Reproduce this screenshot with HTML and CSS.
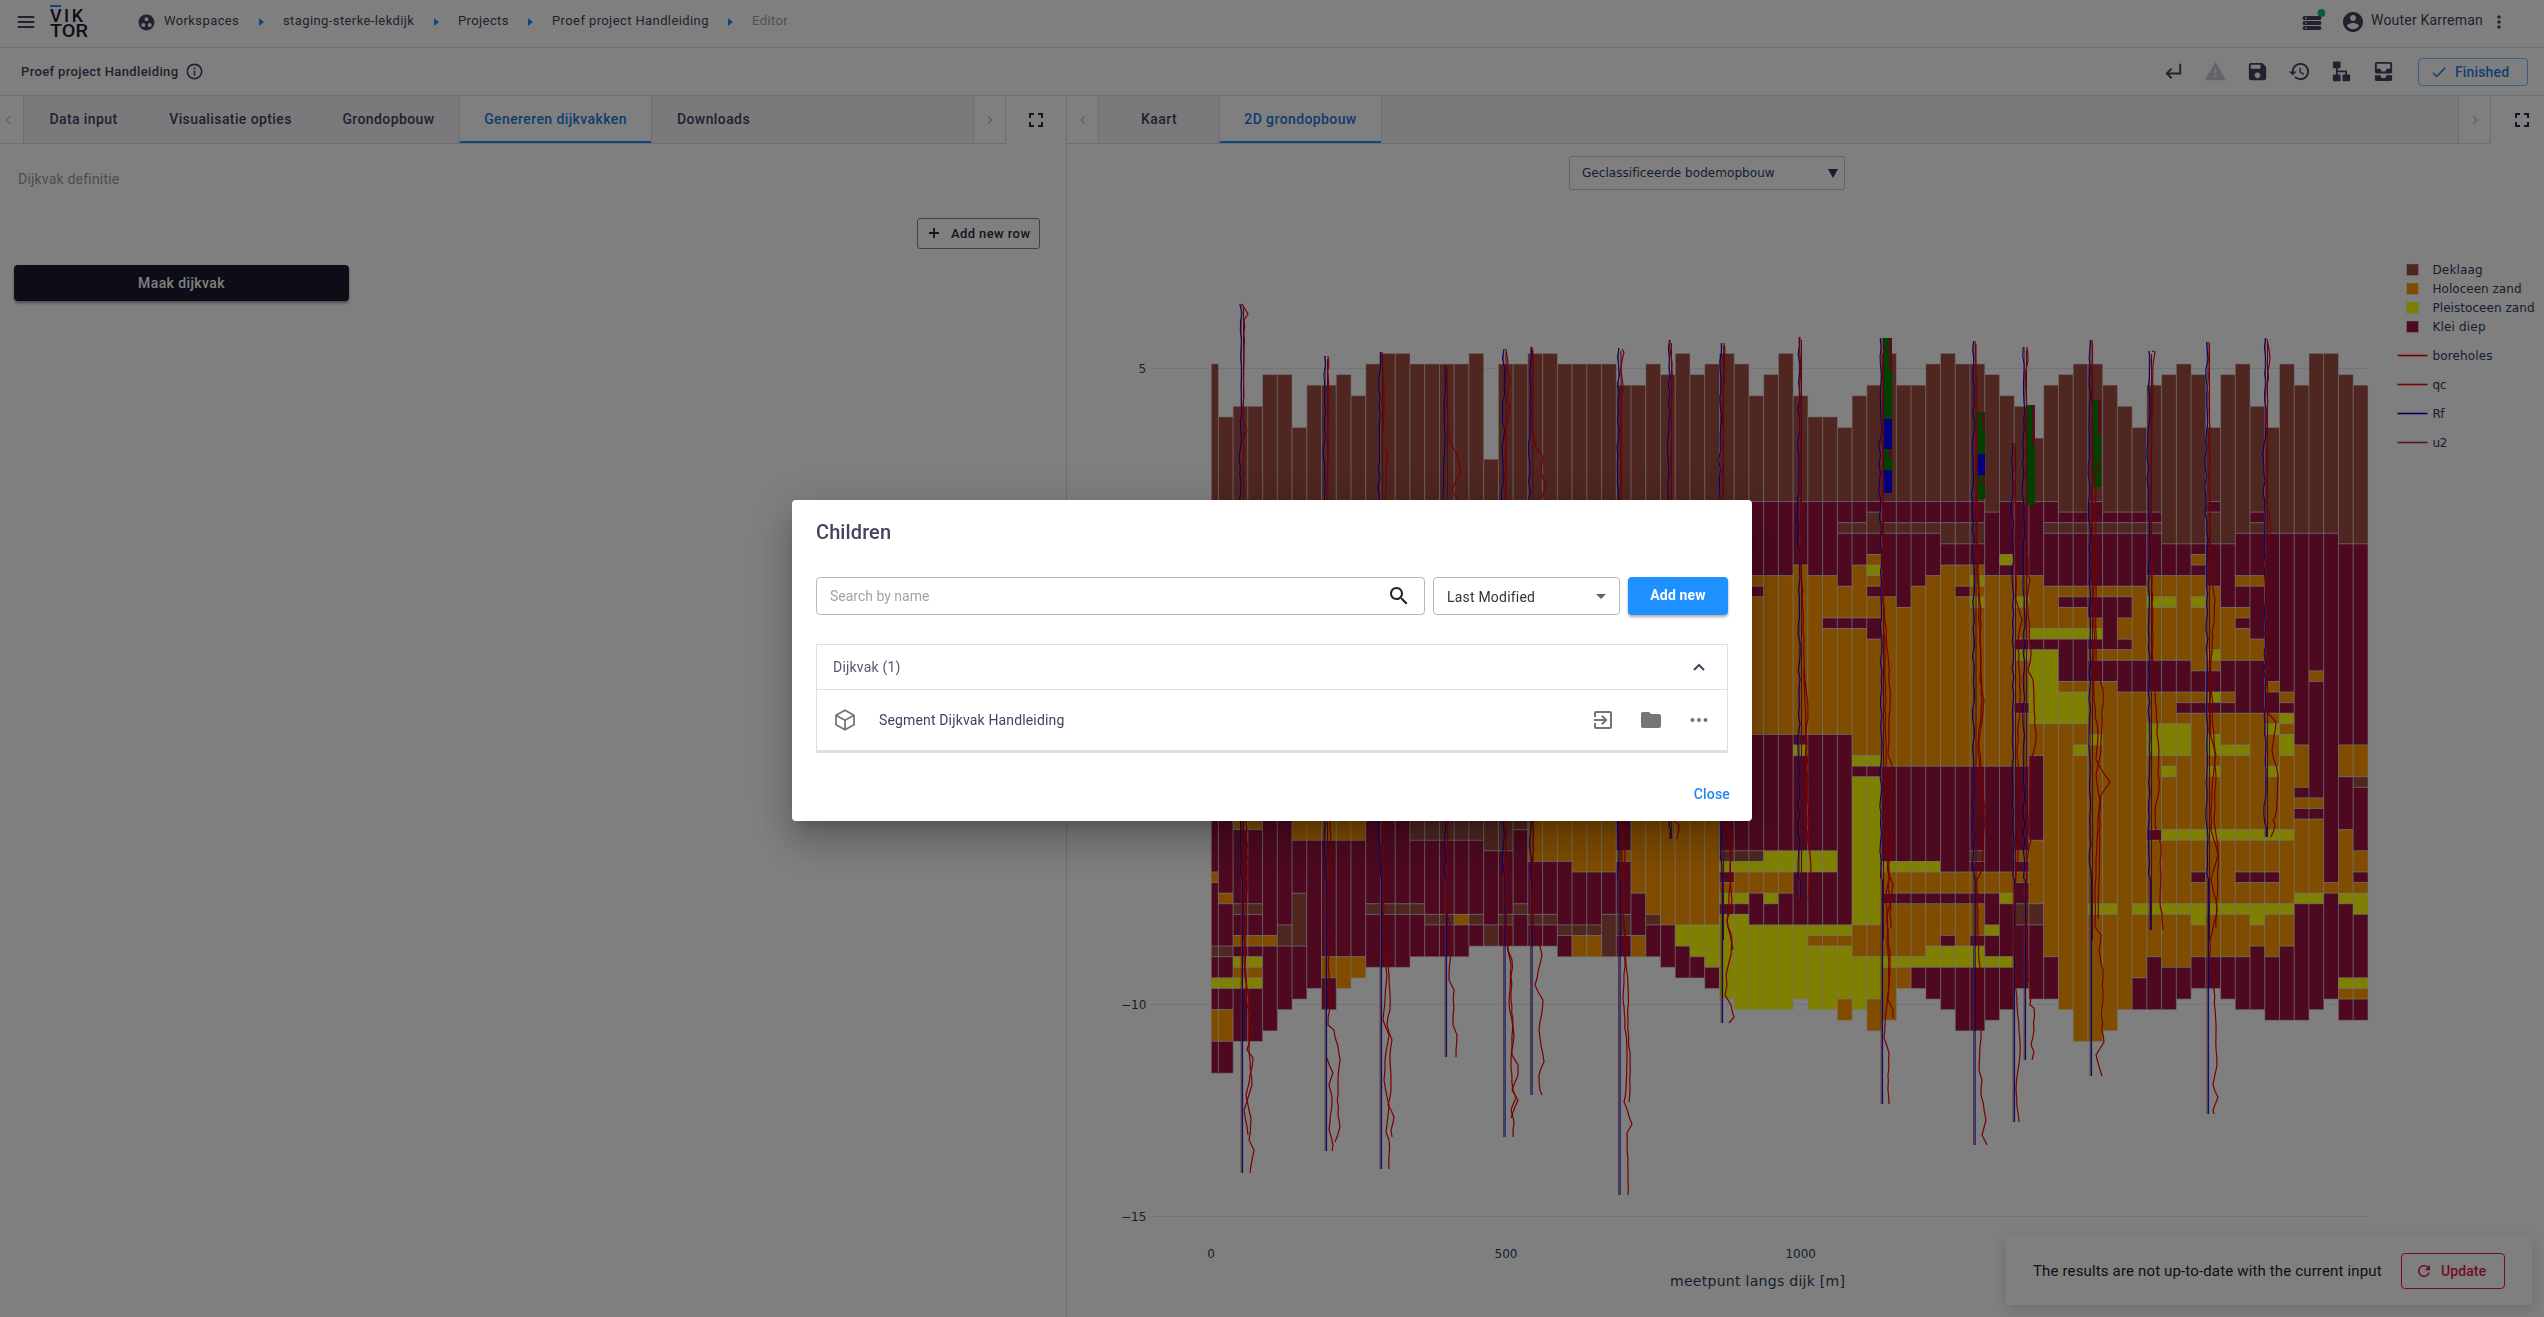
FILE: index.html
```html
<!DOCTYPE html>
<html lang="nl">
<head>
<meta charset="utf-8">
<title>Proef project Handleiding</title>
<link rel="stylesheet" href="styles.css">
</head>
<body>
<div class="app">
  <header class="topbar">
    <svg class="icon menu" viewBox="0 0 24 24" width="22" height="22"><path d="M3 18.5h18v-2.2H3v2.2zm0-5.4h18v-2.2H3v2.2zm0-7.6v2.2h18V5.500H3z"/></svg>
    <svg class="logo" viewBox="0 0 40 34" width="40" height="34">
      <rect class="logo-bar" x="0" y="0" width="11" height="2"/>
      <text x="0" y="16.500" textLength="33" lengthAdjust="spacing">VIK</text>
      <text x="0" y="31.500" textLength="38" lengthAdjust="spacingAndGlyphs">TOR</text>
    </svg>
    <nav class="crumbs">
      <svg class="icon" viewBox="0 0 24 24" width="19" height="19"><path d="M12 2C6.480 2 2 6.480 2 12s4.480 10 10 10 10-4.480 10-10S17.520 2 12 2zM8 17.500c-1.380 0-2.500-1.120-2.500-2.500s1.120-2.500 2.500-2.500 2.500 1.120 2.500 2.500-1.120 2.500-2.500 2.500zM9.500 8c0-1.380 1.120-2.500 2.500-2.500s2.500 1.120 2.500 2.500-1.120 2.500-2.500 2.500S9.500 9.380 9.500 8zm6.500 9.500c-1.380 0-2.500-1.120-2.500-2.500s1.120-2.500 2.500-2.500 2.500 1.120 2.500 2.500-1.120 2.500-2.500 2.500z"/></svg>
      <a class="crumb w1">Workspaces</a><i class="sep"></i>
      <a class="crumb w2">staging-sterke-lekdijk</a><i class="sep"></i>
      <a class="crumb w3">Projects</a><i class="sep"></i>
      <a class="crumb w4">Proef project Handleiding</a><i class="sep"></i>
      <a class="crumb last">Editor</a>
    </nav>
    <div class="user">
      <svg class="queue" viewBox="0 0 24 24" width="24" height="24">
        <path class="ink" d="M3.500 7h15a1.500 1.500 0 0 1 0 4h-15a1.500 1.500 0 0 1 0-4zM3.500 12h15a1.500 1.500 0 0 1 0 4h-15a1.500 1.500 0 0 1 0-4zM3.500 17h15a1.500 1.500 0 0 1 0 4h-15a1.500 1.500 0 0 1 0-4z"/>
        <path class="slots" d="M4 9h2M4 14h2M4 19h2"/>
        <circle class="online" cx="20.500" cy="4" r="4"/>
      </svg>
      <svg class="icon avatar" viewBox="0 0 24 24" width="24" height="24"><path d="M12 2C6.480 2 2 6.480 2 12s4.480 10 10 10 10-4.480 10-10S17.520 2 12 2zm0 3c1.660 0 3 1.340 3 3s-1.340 3-3 3-3-1.340-3-3 1.340-3 3-3zm0 14.200c-2.500 0-4.710-1.280-6-3.220.030-1.990 4-3.080 6-3.080 1.990 0 5.970 1.090 6 3.080-1.290 1.940-3.500 3.220-6 3.220z"/></svg>
      <span class="name">Wouter Karreman</span>
      <svg class="icon" viewBox="0 0 24 24" width="20" height="20"><path d="M12 8c1.100 0 2-.9 2-2s-.9-2-2-2-2 .9-2 2 .9 2 2 2zm0 2c-1.100 0-2 .9-2 2s.9 2 2 2 2-.9 2-2-.9-2-2-2zm0 6c-1.100 0-2 .9-2 2s.9 2 2 2 2-.9 2-2-.9-2-2-2z"/></svg>
    </div>
  </header>

  <div class="toolbar">
    <span class="project">Proef project Handleiding</span>
    <svg class="icon" viewBox="0 0 24 24" width="19" height="19"><path d="M11 7h2v2h-2zm0 4h2v6h-2zm1-9C6.480 2 2 6.480 2 12s4.480 10 10 10 10-4.480 10-10S17.520 2 12 2zm0 18c-4.410 0-8-3.590-8-8s3.590-8 8-8 8 3.590 8 8-3.590 8-8 8z"/></svg>
    <div class="tools">
      <svg class="tool line" viewBox="0 0 24 24"><path d="M19 4v10H6M10 9l-5 5 5 5"/></svg>
      <svg class="tool muted" viewBox="0 0 24 24"><path d="M1 21h22L12 2 1 21zm12-3h-2v-2h2v2zm0-4h-2v-4h2v4z"/></svg>
      <svg class="tool" viewBox="0 0 24 24"><path d="M17 3H5c-1.110 0-2 .9-2 2v14c0 1.100.890 2 2 2h14c1.100 0 2-.9 2-2V7l-4-4zm-5 16c-1.660 0-3-1.340-3-3s1.340-3 3-3 3 1.340 3 3-1.340 3-3 3zm3-10H5V5h10v4z"/></svg>
      <svg class="tool" viewBox="0 0 24 24"><path d="M13 3c-4.970 0-9 4.030-9 9H1l3.890 3.890.070.140L9 12H6c0-3.870 3.130-7 7-7s7 3.130 7 7-3.130 7-7 7c-1.930 0-3.680-.790-4.940-2.060l-1.420 1.420C8.270 19.990 10.510 21 13 21c4.970 0 9-4.030 9-9s-4.030-9-9-9zm-1 5v5l4.280 2.540.720-1.210-3.500-2.080V8H12z"/></svg>
      <svg class="tool" viewBox="0 0 24 24"><path d="M4 1.500h6a1 1 0 0 1 1 1v5a1 1 0 0 1-1 1H8v2.500h9.800v4.200H20a1 1 0 0 1 1 1v5a1 1 0 0 1-1 1h-6a1 1 0 0 1-1-1v-5a1 1 0 0 1 1-1h2v-2.400H8v2.400h2a1 1 0 0 1 1 1v5a1 1 0 0 1-1 1H4a1 1 0 0 1-1-1v-5a1 1 0 0 1 1-1h2.200V8.500H4a1 1 0 0 1-1-1v-5a1 1 0 0 1 1-1z"/></svg>
      <svg class="tool" viewBox="0 0 24 24"><path fill-rule="evenodd" d="M5 2h14a2 2 0 0 1 2 2v8a2 2 0 0 1-2 2H5a2 2 0 0 1-2-2V4a2 2 0 0 1 2-2zm0 2v5h4a3 3 0 0 0 6 0h4V4zM3 16h6a3 3 0 0 0 6 0h6v4a2 2 0 0 1-2 2H5a2 2 0 0 1-2-2z"/></svg>
    </div>
    <button class="finished"><svg viewBox="0 0 24 24" width="18" height="18"><path d="M4 13l5 5L20 6.500"/></svg>Finished</button>
  </div>

  <main class="panes">
    <section class="pane left">
      <div class="tabrow">
        <div class="tabbar">
          <span class="arrow first"><svg viewBox="0 0 8 12" width="6" height="10"><path d="M6 1L2 6l4 5"/></svg></span>
          <a class="tab t119">Data input</a><a class="tab t175">Visualisatie opties</a><a class="tab t141">Grondopbouw</a><a class="tab t193 active">Genereren dijkvakken</a><a class="tab t123">Downloads</a>
          <span class="arrow end"><svg viewBox="0 0 8 12" width="6" height="10"><path d="M2 1l4 5-4 5"/></svg></span>
        </div>
        <span class="expand"><svg viewBox="0 0 14 14" width="14" height="14"><path d="M1 5V1h4M9 1h4v4M13 9v4H9M5 13H1V9"/></svg></span>
      </div>
      <div class="form">
        <div class="field-label">Dijkvak definitie</div>
        <button class="add-row"><svg viewBox="0 0 10 10" width="10" height="10"><path d="M5 0v10M0 5h10"/></svg><span>Add new row</span></button>
        <button class="make">Maak dijkvak</button>
      </div>
    </section>
    <section class="pane right">
      <div class="tabrow">
        <div class="tabbar">
          <span class="arrow"><svg viewBox="0 0 8 12" width="6" height="10"><path d="M6 1L2 6l4 5"/></svg></span>
          <a class="tab t120">Kaart</a><a class="tab t163 active">2D grondopbouw</a>
          <span class="arrow end"><svg viewBox="0 0 8 12" width="6" height="10"><path d="M2 1l4 5-4 5"/></svg></span>
        </div>
        <span class="expand wide"><svg viewBox="0 0 14 14" width="14" height="14"><path d="M1 5V1h4M9 1h4v4M13 9v4H9M5 13H1V9"/></svg></span>
      </div>
      <div class="plot-select"><span>Geclassificeerde bodemopbouw</span><i></i></div>
      <svg id="plot" class="plot" viewBox="1067 190 1477 1127" width="1477" height="1127"></svg>
      <div class="toast">
        <span>The results are not up-to-date with the current input</span>
        <button class="update"><svg viewBox="0 0 24 24" width="18" height="18"><path d="M17.650 6.350C16.200 4.900 14.210 4 12 4c-4.420 0-7.990 3.580-7.990 8s3.570 8 7.990 8c3.730 0 6.840-2.550 7.730-6h-2.080c-.820 2.330-3.040 4-5.650 4-3.310 0-6-2.690-6-6s2.690-6 6-6c1.660 0 3.140.690 4.220 1.780L13 11h7V4l-2.350 2.350z"/></svg>Update</button>
      </div>
    </section>
  </main>
</div>

<div class="backdrop">
  <div class="dialog">
    <h2>Children</h2>
    <div class="filters">
      <div class="search"><span>Search by name</span><svg viewBox="0 0 24 24" width="24" height="24"><path d="M15.500 14h-.790l-.280-.270C15.410 12.590 16 11.110 16 9.500 16 5.910 13.090 3 9.500 3S3 5.910 3 9.500 5.910 16 9.500 16c1.610 0 3.090-.590 4.230-1.570l.270.280v.790l5 4.990L20.490 19l-4.990-5zm-6 0C7.010 14 5 11.990 5 9.500S7.010 5 9.500 5 14 7.010 14 9.500 11.990 14 9.500 14z"/></svg></div>
      <div class="sort"><span>Last Modified</span><i></i></div>
      <button class="add-new">Add new</button>
    </div>
    <div class="list">
      <div class="group"><span>Dijkvak (1)</span><svg viewBox="0 0 12 8" width="12" height="8"><path d="M1 7l5-5 5 5"/></svg></div>
      <div class="row">
        <svg class="cube" viewBox="0 0 24 24" width="24" height="24"><path d="M12 2.200l9 5v9.600l-9 5-9-5V7.200zM3.500 7.500L12 12.300l8.500-4.800M12 12.300v9.500"/></svg>
        <span class="label">Segment Dijkvak Handleiding</span>
        <svg class="act" viewBox="0 0 24 24" width="24" height="24"><path d="M10.090 15.590L11.500 17l5-5-5-5-1.410 1.410L12.670 11H3v2h9.670l-2.580 2.590zM19 3H5c-1.110 0-2 .9-2 2v4h2V5h14v14H5v-4H3v4c0 1.100.890 2 2 2h14c1.100 0 2-.9 2-2V5c0-1.100-.9-2-2-2z"/></svg>
        <svg class="act" viewBox="0 0 24 24" width="24" height="24"><path d="M10 4H4c-1.100 0-1.990.9-1.990 2L2 18c0 1.100.9 2 2 2h16c1.100 0 2-.9 2-2V8c0-1.100-.9-2-2-2h-8l-2-2z"/></svg>
        <svg class="act" viewBox="0 0 24 24" width="24" height="24"><circle cx="5.500" cy="12" r="2"/><circle cx="12" cy="12" r="2"/><circle cx="18.500" cy="12" r="2"/></svg>
      </div>
    </div>
    <button class="close">Close</button>
  </div>
</div>
<script src="chart.js"></script>
</body>
</html>
```
FILE: styles.css
```css
* { box-sizing: border-box; }
body { margin: 0; font-family: Roboto, "Liberation Sans", sans-serif; font-size: 14px; color: #46415e; background: #fff; overflow: hidden; }
button { font: inherit; background: none; border: 0; padding: 0; }
.app { display: flex; flex-direction: column; width: 100vw; height: 100vh; }
.icon, .ink { fill: #46415e; }

.topbar { display: flex; align-items: center; flex: none; height: 48px; border-bottom: 1px solid #dcdce0; padding: 0 35px 4px 15px; }
.menu { margin-top: 0; }
.logo { margin-left: 13px; margin-top: 1px; overflow: visible; }
.logo text { font: 500 18px Roboto, sans-serif; fill: #1c1b30; }
.logo-bar { fill: #1e90ff; }
.crumbs { display: flex; align-items: center; margin-left: 47px; font-size: 13px; letter-spacing: .4px; }
.crumbs .icon { margin-top: 1px; }
.crumb { white-space: nowrap; margin-top: -3px; }
.w1 { width: 95px; margin-left: 8px; }
.w2 { width: 151px; }
.w3 { width: 70px; }
.w4 { width: 176px; }
.crumb.last { color: #a0a0a0; }
.sep { width: 5px; margin-right: 19px; border-left: 5px solid #1e90ff; border-top: 4px solid transparent; border-bottom: 4px solid transparent; }
.user { display: flex; align-items: center; margin-left: auto; }
.queue { margin-right: 16px; margin-top: -1px; }
.slots { stroke: #fff; stroke-width: 1; fill: none; }
.online { fill: #00c08b; }
.name { width: 118px; margin: -3px 0 0 6px; font-size: 14px; letter-spacing: .2px; white-space: nowrap; }

.toolbar { display: flex; align-items: center; flex: none; height: 48px; border-bottom: 1px solid #dcdce0; padding: 0 16px 0 21px; }
.project { width: 164px; font-weight: 500; font-size: 13px; letter-spacing: .37px; white-space: nowrap; }
.tools { display: flex; gap: 19px; margin-left: auto; }
.tool { width: 23px; height: 23px; fill: #46415e; }
.tool.muted { fill: #c9c8d4; }
.tool.line { fill: none; stroke: #46415e; stroke-width: 2; }
.finished { display: flex; align-items: center; gap: 7px; width: 110px; height: 28px; margin-left: 23px; padding-left: 11px; border: 1px solid #7abcff; border-radius: 4px; color: #1e7fe6; font-weight: 500; letter-spacing: .15px; }
.finished path { fill: none; stroke: #1e7fe6; stroke-width: 2; }

.panes { display: flex; flex: 1; min-height: 0; }
.pane { display: flex; flex-direction: column; position: relative; }
.left { width: 1067px; border-right: 1px solid #dcdce0; }
.right { flex: 1; }
.tabrow { display: flex; flex: none; height: 48px; }
.tabbar { display: flex; flex: 1; background: #f5f5fa; border-bottom: 1px solid #dcdce0; }
.arrow { display: flex; align-items: center; justify-content: center; width: 32px; background: #fff; border-right: 1px solid #dcdce0; }
.arrow.first { width: 24px; padding-right: 8px; }
.arrow.end { margin-left: auto; border-left: 1px solid #dcdce0; width: 33px; }
.arrow path { fill: none; stroke: #b6b5c2; stroke-width: 1.600; }
.tab { display: flex; align-items: center; justify-content: center; font-weight: 500; letter-spacing: .4px; padding-bottom: 1px; white-space: nowrap; }
.tab.active { background: #fff; color: #1e78dc; border: 1px solid #dcdce0; border-width: 0 1px; box-shadow: inset 0 -2px #1e90ff; }
.t119 { width: 119px; } .t120 { width: 120px; } .t175 { width: 175px; } .t141 { width: 141px; } .t193 { width: 193px; } .t123 { width: 123px; } .t163 { width: 163px; }
.expand { display: flex; align-items: center; justify-content: center; width: 60px; }
.expand.wide { width: 53px; padding-left: 9px; }
.expand path { fill: none; stroke: #2c2940; stroke-width: 2; }

.form { display: flex; flex-direction: column; padding: 26px 26px 0 14px; }
.field-label { margin-left: 4px; line-height: 18px; color: #9a9a9a; letter-spacing: .2px; }
.add-row { display: flex; align-items: center; align-self: flex-end; width: 123px; height: 31px; margin-top: 30px; padding: 0 0 1px 11px; gap: 12px; border: 1px solid #808080; border-radius: 3px; color: #2c2940; font-size: 13px; font-weight: 500; letter-spacing: .4px; }
.add-row path { stroke: #2c2940; stroke-width: 1.800; }
.make { width: 335px; height: 36px; margin-top: 16px; border-radius: 4px; background: #1b1a2e; color: #fff; font-weight: 500; letter-spacing: .4px; padding-bottom: 1px; box-shadow: 0 2px 3px rgba(0,0,0,.4); }

.plot-select { display: flex; align-items: center; justify-content: space-between; flex: none; width: 276px; height: 34px; margin: 12px 0 0 502px; padding: 0 6px 0 12px; border: 1px solid #bec8d9; border-radius: 2px; font: 12px "DejaVu Sans", sans-serif; letter-spacing: .05px; color: #2a3f5f; }
.plot-select i { border: 5px solid transparent; border-top: 9px solid #2a3f5f; border-bottom: 0; }
.plot { flex: none; display: block; }
.plot text { font-family: "DejaVu Sans", sans-serif; font-size: 12px; fill: #2a3f5f; }
.plot .axis-title { font-size: 14px; }
.toast { position: absolute; right: 12px; bottom: 12px; display: flex; align-items: center; justify-content: space-between; width: 526px; height: 69px; padding: 0 27px; background: #fff; border-radius: 3px; box-shadow: 0 4px 16px rgba(0,0,0,.16); color: #1d1c28; font-size: 15px; letter-spacing: .15px; }
.update { display: flex; align-items: center; gap: 8px; width: 104px; height: 36px; padding-left: 13px; border: 1.500px solid #e5174a; border-radius: 4px; color: #e5174a; font-size: 14px; font-weight: 500; letter-spacing: .1px; }
.update path { fill: #e5174a; }

.backdrop { position: fixed; inset: 0; display: flex; align-items: center; justify-content: center; background: rgba(0,0,0,.5); padding-top: 4px; }
.dialog { display: flex; flex-direction: column; width: 960px; height: 321px; padding: 0 24px; background: #fff; border-radius: 4px; box-shadow: 0 11px 15px -7px rgba(0,0,0,.2), 0 24px 38px 3px rgba(0,0,0,.14), 0 9px 46px 8px rgba(0,0,0,.12); }
.dialog h2 { margin: 20px 0 33px; font-size: 20px; line-height: 24px; font-weight: 500; letter-spacing: .1px; color: #46415e; }
.filters { display: flex; gap: 8px; height: 38px; }
.search, .sort { display: flex; align-items: center; justify-content: space-between; border: 1px solid #b8b8b8; border-radius: 4px; }
.search { flex: 1; padding: 0 13px 0 13px; color: #a3a3a3; }
.search svg { fill: #222; }
.sort { width: 187px; padding: 1px 13px 0; color: #333; letter-spacing: .2px; }
.sort i { border: 5px solid transparent; border-top-color: #666; border-bottom: 0; }
.add-new { width: 100px; border-radius: 4px; background: #1e90ff; color: #fff; font-weight: 700; letter-spacing: .15px; box-shadow: 0 2px 3px rgba(0,0,0,.35); padding-bottom: 2px; }
.list { margin-top: 29px; border: 1px solid #e0e0e0; border-bottom-width: 3px; }
.group, .row { display: flex; align-items: center; }
.group { justify-content: space-between; height: 45px; padding: 0 22px 1px 16px; border-bottom: 1px solid #e0e0e0; letter-spacing: .2px; color: #5a5672; }
.group path { fill: none; stroke: #46415e; stroke-width: 2; }
.row { height: 60px; padding: 0 16px; gap: 24px; }
.cube { fill: none; stroke: #757575; stroke-width: 1.800; }
.label { margin: -1px auto 0 -2px; letter-spacing: .15px; }
.act { fill: #757575; }
.close { align-self: flex-end; margin: 32px -2px 0 0; color: #1e88f0; font-weight: 500; line-height: 18px; letter-spacing: .2px; }
```
FILE: chart.js
```js
// Soil classification per column: D = Deklaag, H = Holoceen zand, Y = Pleistoceen zand, K = Klei diep.
// "top: layer + row where it ends", rows are 0.25 m high.
const columns = `1:D14,K49,H50,K56,D57,K59,Y60,K62,H65,K68
6:D14,K51,H52,K56,D57,K59,Y60,K62,H65,K68
5:D14,H45,K52,D53,K55,H56,K57,Y58,H59,Y60,K65
5:D14,H45,K52,D53,K55,H56,K57,Y58,H59,Y60,K65
2:D14,K55,H56,K64
2:D14,K54,D56,K62
7:D14,H46,K51,D56,K61
3:D14,H46,K60
3:D14,H46,K57,H59,K62
2:D14,H46,K57,H60
4:D14,H46,K57,H59
1:D14,K52,D53,K58
0:D14,K52,D53,K58
0:D14,K52,D53,K58
1:D46,K52,D53,K57
1:D46,K53,D54,K57
1:D46,K53,D54,K57
1:D46,K53,H54,K57
0:D46,K53,D54,K56
10:D47,K54,D56
1:D47,K53,D54,K56
1:D45,K52,D53,K56
0:D14,H48,K53,D54,K56
0:D14,H48,K53,D54,K56
1:D14,H48,K54,D55,K57
1:D14,H49,K54,D55,H57
1:D14,H49,K54,D55,H57
1:D14,H49,K53,D57
3:D14,K47,H48,K53,D55,K57
3:D14,H51,K55,H57
1:D14,H53,D54,K57
2:D14,H54,K58
0:D14,H54,Y56,K59
2:D14,H54,Y57,K59
1:D14,H54,Y58,K60
0:D14,K47,D48,Y49,K50,H51,Y52,K53,Y61
1:D14,K47,D48,Y49,H51,Y52,K53,Y62
4:D14,K21,H22,K23,H36,K47,D48,Y49,H51,K54,Y62
2:D14,K21,H36,K47,Y49,H51,Y52,K54,Y62
0:D14,K21,H36,K47,Y49,H51,K54,Y62
4:D14,K20,H36,K37,Y38,K47,Y49,K54,Y61
6:D14,K21,H36,K47,Y49,K54,Y55,H56,Y62
6:D14,K21,H25,K26,H36,K47,Y49,K54,Y55,H56,Y62
7:D14,K16,D17,K22,H25,K26,H36,K54,Y55,H56,Y61,H63
4:D14,K16,D17,K20,H25,K26,H38,Y39,K40,Y54,H57,Y62
3:D14,K15,D17,K19,H20,Y21,H22,K23,H25,K27,H38,Y39,K40,Y54,H57,Y61,H64
0:D14,K16,D17,K23,H39,K48,Y49,H51,K52,H57,Y58,H63
3:D14,K16,D17,K24,H39,K48,Y49,H51,K52,H57,Y58,H60
3:D14,K16,D17,K22,H39,K48,Y49,H51,K52,H57,Y58,K60
1:D14,K16,D17,K21,H39,K48,Y49,H51,K52,H56,Y58,K61
0:D14,K16,D18,K20,H39,K49,H51,K52,H55,K56,Y58,K62
1:D14,K16,D18,K20,H22,K23,H39,K49,H51,K52,H56,Y58,K64
1:D14,K16,D18,K20,H21,Y22,H23,Y24,H39,K47,D48,K49,H51,K52,H55,K56,Y58,K64
2:D15,K21,H39,K49,H51,K54,Y55,K57,Y58,K63
4:D14,K19,Y20,K21,H39,K49,H51,Y52,K57,Y58,K62
5:D14,K21,H23,Y24,H27,K28,Y29,H33,K34,H39,K47,H48,K49,H50,K52,D54,K60
8:D14,K21,H26,Y27,K28,Y35,H38,K46,H52,D54,K61
3:D14,K16,D17,K22,H26,Y27,K28,Y35,H57,K61
2:D15,K16,D17,K22,H23,K24,H26,Y27,K31,H32,Y35,H62
1:D15,K16,D17,K22,H23,K24,H26,Y27,K31,H32,Y35,H37,Y38,H65
1:D14,K16,D17,K22,H23,K25,H26,Y27,K28,H29,K31,H36,Y37,H52,Y53,H65
3:D15,K16,D17,K22,H23,K28,H29,K31,H52,Y53,H64
5:D15,K16,D17,K22,H23,K25,H27,K28,H29,K32,H62
7:D15,K16,D17,K22,H29,K32,H52,Y53,H59,K62
3:D15,K16,D17,K21,H23,Y24,H29,K32,H35,Y38,H45,K46,H52,Y53,H57,K62
2:D18,K21,H23,Y24,H29,K32,H35,Y38,H39,Y40,H45,Y46,H52,Y53,H58,K62
1:D18,K21,H29,K32,H33,K34,H35,Y38,H45,Y46,H52,Y53,H58,K61
2:D18,K19,H20,K21,H23,Y24,H30,K32,H33,K34,H45,Y46,H49,K50,H52,Y54,H57,K60
7:D14,K15,D18,K22,H28,Y29,H30,K32,Y33,K34,H36,Y38,H39,Y40,H45,Y46,H52,Y53,H57,K60
2:D18,K24,H29,K32,H33,K34,H37,Y38,H45,Y46,H52,Y53,H57,K61
1:D17,K21,H22,K24,H25,K26,H29,K34,H37,Y38,H45,Y46,H49,K50,H52,Y53,H57,K62
5:D15,K16,D17,K21,H22,K27,H29,K34,H45,Y46,H49,K50,H52,Y54,H56,K62
7:D17,K31,H32,K34,H35,Y36,H39,Y40,H45,Y46,H49,K50,H52,Y53,H57,K63
1:D17,K32,H33,K34,Y35,H36,Y38,H45,Y46,H52,Y53,H56,K63
3:D17,K37,H41,K42,H43,K44,H51,Y52,K63
0:D17,K30,H31,K42,H43,K44,H51,Y52,K62
0:D17,K50,H51,K61
2:D18,K37,H40,K45,H51,Y52,K59,Y60,H61,K63
3:D18,K37,H40,D41,K47,H49,K50,H51,Y53,K59,Y60,H61,K63`.split("\n");

// Cone penetration tests: x, top, bottom of the sounding and the qc traces as x,y pairs.
const soundings = [
  [1242,304,1173,"1242,304 1248,314 1244,320 1244,348 1243,420 1247,431 1244,436 1243,500 1246,821 1248,877 1245,940 1246,1000 1252,1028 1247,1050 1253,1058 1250,1075 1246,1095 1251,1118 1249,1140 1254,1150 1250,1173","1243,821 1244,960 1250,1010 1249,1045 1252,1085 1244,1110 1248,1135"],
  [1326,356,1151,"1328,356 1329,396 1327,500 1330,821 1331,850 1327,900 1330,1000 1328,1025 1334,1030 1340,1060 1338,1085 1338,1115 1340,1127 1335,1142","1327,1058 1333,1073 1329,1085 1332,1098 1329,1130 1333,1145 1332,1151"],
  [1381,352,1169,"1382,352 1384,395 1382,445 1387,452 1386,490 1383,510 1383,821 1384,940 1389,975 1390,1010 1387,1025 1392,1040 1390,1060 1391,1090 1388,1105 1394,1117 1391,1130 1392,1137","1383,950 1387,975 1383,1020 1389,1035 1385,1060 1384,1080 1389,1105 1386,1132 1389,1140 1389,1169"],
  [1446,366,1057,"1446,366 1448,430 1451,445 1456,452 1461,472 1452,490 1458,500 1448,520 1447,821 1447,915 1452,928 1449,980 1454,990 1453,1025 1457,1035 1456,1050 1456,1057"],
  [1504.5,349,1137,"1506,349 1508,362 1507,370 1510,380 1507,400 1510,408 1505,430 1506,930 1508,950 1512,960 1511,1000 1513,1020 1512,1055 1518,1065 1518,1075 1512,1090 1518,1100 1511,1118","1506,935 1511,965 1509,1000 1514,1035 1511,1060 1513,1090 1516,1098 1511,1110 1514,1122 1513,1137"],
  [1531.5,347,1095,"1532,347 1532,430 1536,447 1543,457 1541,472 1546,485 1542,497 1534,520 1533,930 1538,940 1542,955 1535,985 1543,1000 1539,1030 1544,1062 1539,1075 1540,1090 1542,1095"],
  [1619.5,348,1195,"1622,349 1624,352 1621,370 1623,385 1621,400 1621,500 1623,821 1625,850 1622,900 1626,950 1623,1000 1625,1020 1627,1060 1626,1090 1624,1102 1632,1124 1627,1133 1627,1150 1628,1180 1628,1195","1621,821 1624,925 1628,985 1628,1020 1630,1062 1629,1102"],
  [1670,340,839,"1670,340 1673,386 1671,410 1671,500 1674,821 1679,825 1677,839"],
  [1722,343,1023,"1724,343 1725,351 1723,400 1723,500 1726,821 1730,850 1731,880 1727,920 1732,940 1731,955 1726,975 1727,985 1725,995 1731,1005 1734,1017 1729,1023","1728,821 1733,835 1730,870 1732,900 1727,920 1733,950"],
  [1800,337,899,"1800,337 1801,550 1805,680 1808,710 1806,745 1805,821 1808,840 1811,865 1808,899","1804,670 1807,745 1808,821 1808,843"],
  [1882,338,1104,"1885,346 1883,360 1882,480 1883,600 1888,655 1890,700 1888,755 1892,765 1890,821 1893,840 1887,870 1893,885 1887,915 1890,960 1888,1000 1893,1010 1893,1018","1883,600 1885,655 1886,755 1884,821 1891,850 1886,900 1889,980 1885,1025 1884,1038 1889,1053 1888,1075 1889,1104","1886,830 1890,900 1891,928"],
  [1974.5,341,1145,"1975,341 1977,400 1977,570 1981,610 1980,680 1984,700 1979,740 1983,790 1985,821 1982,870 1977,880 1979,960 1980,975 1976,1020 1981,1030 1979,1070 1982,1080 1981,1095 1986,1120 1982,1135 1987,1145","1976,500 1979,610 1982,700 1978,745 1981,821"],
  [2014,443,1122,"2015,443 2015,500 2016,600 2022,620 2018,640 2020,700 2017,755 2021,810 2018,845 2015,900 2016,980 2019,1030 2020,1055 2016,1090 2019,1122"],
  [2025,347,1060,"2027,347 2028,361 2026,370 2026,500 2028,575 2030,580 2027,600 2031,655 2028,670 2033,680 2036,740 2031,760 2030,810 2028,830 2031,840 2027,860 2026,930 2028,978 2031,985 2030,1005 2034,1008 2034,1030 2031,1045 2034,1052 2032,1060"],
  [2091,340,1076,"2092,340 2092,500 2094,600 2094,700 2098,735 2096,760 2110,782 2101,795 2098,821 2096,860 2095,927 2101,935 2099,950 2103,970 2102,1030 2104,1042 2096,1055 2102,1076","2096,460 2096,660 2103,690 2101,750 2096,775 2100,800 2098,919"],
  [2150,351,930,"2152,351 2155,352 2153,365 2152,420 2150,500 2152,580 2153,670 2158,740 2159,790 2155,810 2155,825 2161,845 2160,900 2162,920 2163,930"],
  [2208,342,1114,"2209,342 2209,410 2210,500 2210,560 2215,600 2211,660 2210,730 2216,755 2212,790 2211,830 2218,855 2211,880 2216,900 2216,928","2210,650 2214,740 2216,780 2214,820 2218,850 2217,910 2210,940 2210,968 2214,980 2216,1035 2217,1065 2213,1085 2218,1097 2213,1110 2214,1114"],
  [2266,338,837,"2267,339 2270,358 2268,370 2267,410 2267,500 2271,530 2266,555 2267,700 2267,712 2276,722 2272,750 2278,775 2277,800 2275,818 2273,820 2275,825 2271,837"]
];

const boreholes = [
  [1882.5, 338, 81, "g"], [1882.5, 419, 30, "b"], [1882.5, 449, 21, "g"], [1882.5, 470, 23, "b"],
  [1977, 412, 42, "g"], [1977, 454, 21, "b"], [1977, 475, 24, "g"],
  [2027, 405, 100, "g"], [2093, 400, 87, "g"]
];

const fill = { D: "#9e4c41", H: "#ff9900", Y: "#ffff00", K: "#9c1240", g: "#008000", b: "#0000ff" };
const rowY = r => 353.4 + 10.585 * r;
let seed = 7;
const rnd = () => (seed = (seed * 16807) % 2147483647) / 2147483647 - 0.5;
const out = [];
const rect = (x, y, w, h, f, extra = "") => out.push(`<rect x="${x}" y="${y}" width="${w}" height="${h}" fill="${f}" ${extra}/>`);
const path = (pts, color, w = 1) => out.push(`<polyline points="${pts.map(p => p[0].toFixed(1) + "," + p[1].toFixed(1)).join(" ")}" fill="none" stroke="${color}" stroke-width="${w}"/>`);

for (const y of [368.5, 1004.5, 1216.5]) out.push(`<path d="M1151 ${y}H2368" stroke="#e6e9f6"/>`);

columns.forEach((line, c) => {
  const [top, layers] = line.split(":");
  const x = c ? 1218.4 + 14.738 * (c - 1) : 1211.3;
  const w = c ? 14.738 : 7.1;
  let r = +top;
  for (const l of layers.split(",")) {
    const end = +l.slice(1);
    rect(x.toFixed(2), rowY(r).toFixed(2), w, ((end - r) * 10.585).toFixed(2), fill[l[0]], 'stroke="#e5ecf6" stroke-opacity=".5" stroke-width="1"');
    r = end;
  }
});

for (const [x, y, h, f] of boreholes) {
  const w = x < 1900 ? 9.5 : 8;
  rect(x, y, w, h, fill[f]);
  if (f === "g") rect(x + w - 3, y, 3, h * 0.4, "#a02030");
}

for (const [x, top, bottom, ...traces] of soundings) {
  const straight = Math.min(bottom - 10, 880);
  const rf = [];
  for (let y = top; y < straight; y += 9) rf.push([x - 1 + rnd() * 2.4 - (y > 440 && y < 520 ? 1 : 0), y]);
  rf.push([x + 0.6, straight], [x + 0.6, bottom]);
  path([[x - 0.8, top], [x - 0.8, bottom]], "#9e4c52", 1);
  path([[x + 1.5, top + 3], [x + 1.5, Math.min(bottom, 940)]], "#a01828", 1.1);
  path(rf, "#0000e0", 1);
  for (const t of traces) {
    const key = t.split(" ").map(p => p.split(",").map(Number));
    const pts = [key[0]];
    for (let i = 1; i < key.length; i++) {
      const [ax, ay] = key[i - 1], [bx, by] = key[i];
      const n = Math.max(1, Math.round((by - ay) / 8));
      for (let k = 1; k <= n; k++) pts.push([ax + (bx - ax) * k / n + (k < n ? rnd() * 1.4 : 0), ay + (by - ay) * k / n]);
    }
    path(pts, "#f00000", 1.2);
  }
}

const text = (x, y, s, len, extra = "") => out.push(`<text x="${x}" y="${y}" textLength="${len}" ${extra}>${s}</text>`);
text(1138.500, 373, "5", 7.6);
text(1121, 1009, "−10", 25.300);
text(1121, 1221, "−15", 25.300);
text(1207.2, 1258, "0", 7.6);
text(1494.5, 1258, "500", 23);
text(1785.5, 1258, "1000", 30.500);
text(1670, 1286, "meetpunt langs dijk [m]", 175, 'class="axis-title"');

[["Deklaag", "D", 50], ["Holoceen zand", "H", 89], ["Pleistoceen zand", "Y", 102], ["Klei diep", "K", 53]].forEach(([s, k, len], i) => {
  rect(2406.5, 264 + 19 * i, 12, 11.5, fill[k], 'stroke="#e5ecf6" stroke-width=".5"');
  text(2432.5, 274 + 19 * i, s, len);
});
[["boreholes", "#f00000", 60], ["qc", "#f00000", 14], ["Rf", "#0000d0", 12], ["u2", "#a03030", 15]].forEach(([s, color, len], i) => {
  out.push(`<path d="M2397.5 ${355.5 + 29 * i}h30" stroke="${color}" stroke-width="1.6"/>`);
  text(2432.5, 360 + 29 * i, s, len);
});

document.getElementById("plot").innerHTML = out.join("");
```
